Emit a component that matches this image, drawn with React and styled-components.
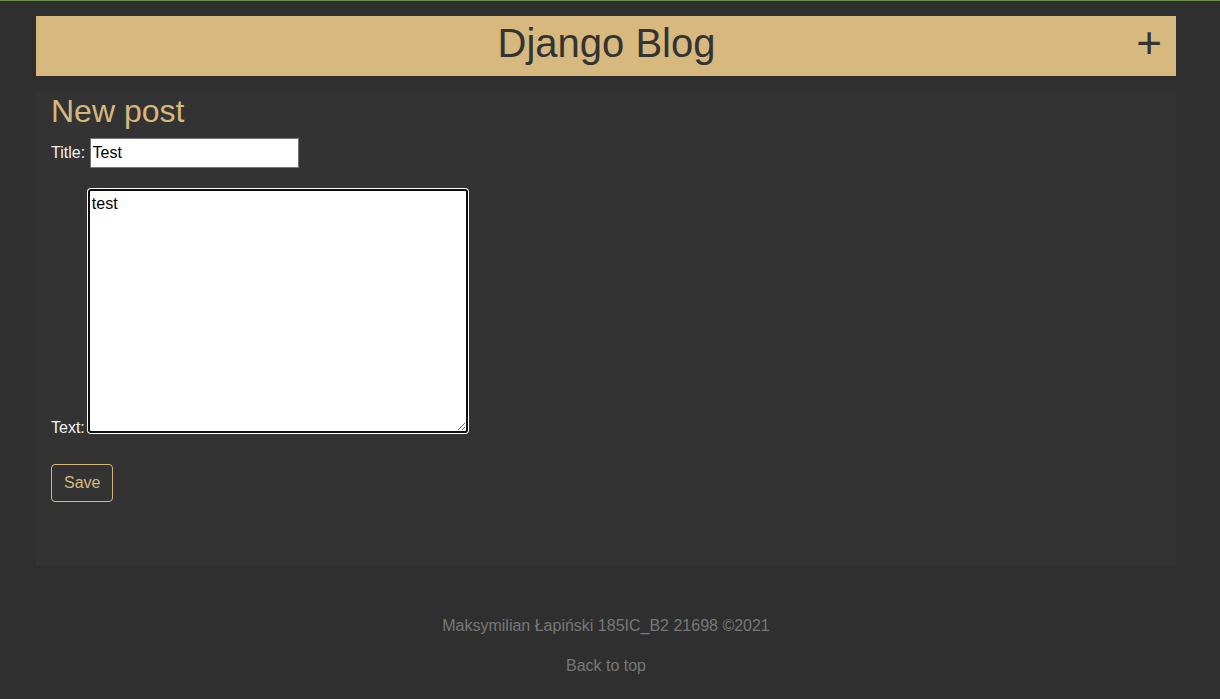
import React from 'react';
import styled, { createGlobalStyle } from 'styled-components';

const GlobalStyle = createGlobalStyle`
  html, body {
    margin: 0;
    padding: 0;
    background: #2f2f2f;
  }
  body {
    border-top: 1px solid #6b8e4a;
    font-family: "Liberation Sans", Arial, sans-serif;
    font-size: 16px;
    line-height: 1.5;
    color: #f2f2f2;
  }
  * {
    box-sizing: border-box;
  }
`;

const Container = styled.div`
  width: 1140px;
  margin: 0 0 0 36px;
`;

const Header = styled.header`
  margin-top: 15px;
  height: 60px;
  background: #d7b97f;
  display: grid;
  grid-template-columns: 1fr auto 1fr;
  align-items: start;
  padding: 0 14px 0 15px;
  color: #333333;
`;

const SiteTitle = styled.h1`
  grid-column: 2;
  margin: 3px 0 0;
  font-size: 40px;
  font-weight: 400;
  line-height: 48px;
`;

const AddLink = styled.a`
  grid-column: 3;
  justify-self: end;
  margin-top: 1px;
  font-size: 44px;
  line-height: 52px;
  color: #333333;
  text-decoration: none;
`;

const Panel = styled.main`
  margin-top: 16px;
  background: #333333;
  padding: 0 15px 64px;
`;

const Heading = styled.h2`
  margin: 0 0 8px;
  font-size: 32px;
  font-weight: 400;
  line-height: 38.4px;
  color: #d6b87d;
`;

const Field = styled.div`
  display: flex;
  align-items: ${props => (props.bottom ? 'flex-end' : 'center')};
  gap: 4.5px;
  margin-top: ${props => props.top || 0}px;
`;

const Label = styled.label`
  line-height: ${props => (props.tight ? '16px' : '24px')};
  margin-bottom: ${props => (props.tight ? '-3px' : '0')};
  color: #f2f2f2;
`;

const TextInput = styled.input`
  width: 209px;
  height: 30px;
  padding: 1px 2px;
  border: 1px solid #767676;
  border-radius: 0;
  font-family: "Liberation Sans", Arial, sans-serif;
  font-size: 16px;
  line-height: 24px;
  color: #000;
  background: #fff;
  outline: none;
`;

const TextArea = styled.textarea`
  width: 380px;
  height: 244px;
  margin-left: -1.5px;
  padding: 1px 2px;
  border: 2px solid #101010;
  border-radius: 3px;
  box-shadow: 0 0 0 1px #ffffff;
  font-family: "Liberation Sans", Arial, sans-serif;
  font-size: 16px;
  line-height: 24px;
  color: #000;
  background: #fff;
  outline: none;
  resize: both;
`;

const SaveButton = styled.button`
  margin-top: 31px;
  height: 38px;
  padding: 6px 12px;
  border: 1px solid #d6b87d;
  border-radius: 4px;
  background: transparent;
  color: #d6b87d;
  font-family: "Liberation Sans", Arial, sans-serif;
  font-size: 16px;
  line-height: 24px;
  cursor: pointer;
`;

const Footer = styled.footer`
  margin-top: 48px;
  text-align: center;
  color: #777777;
`;

const FooterLine = styled.p`
  margin: 0 0 16px;
  line-height: 24px;
`;

const FooterLink = styled.a`
  color: #777777;
  text-decoration: none;
`;

function App() {
  return (
    <>
      <GlobalStyle />
      <Container>
        <Header>
          <SiteTitle>Django Blog</SiteTitle>
          <AddLink href="#">+</AddLink>
        </Header>
        <Panel>
          <Heading>New post</Heading>
          <form onSubmit={e => e.preventDefault()}>
            <Field>
              <Label htmlFor="id_title">Title:</Label>
              <TextInput id="id_title" type="text" defaultValue="Test" />
            </Field>
            <Field bottom top={21}>
              <Label tight htmlFor="id_text">Text:</Label>
              <TextArea id="id_text" defaultValue="test" />
            </Field>
            <SaveButton type="submit">Save</SaveButton>
          </form>
        </Panel>
        <Footer>
          <FooterLine>Maksymilian Łapiński 185IC_B2 21698 ©2021</FooterLine>
          <FooterLine>
            <FooterLink href="#">Back to top</FooterLink>
          </FooterLine>
        </Footer>
      </Container>
    </>
  );
}

export default App;
